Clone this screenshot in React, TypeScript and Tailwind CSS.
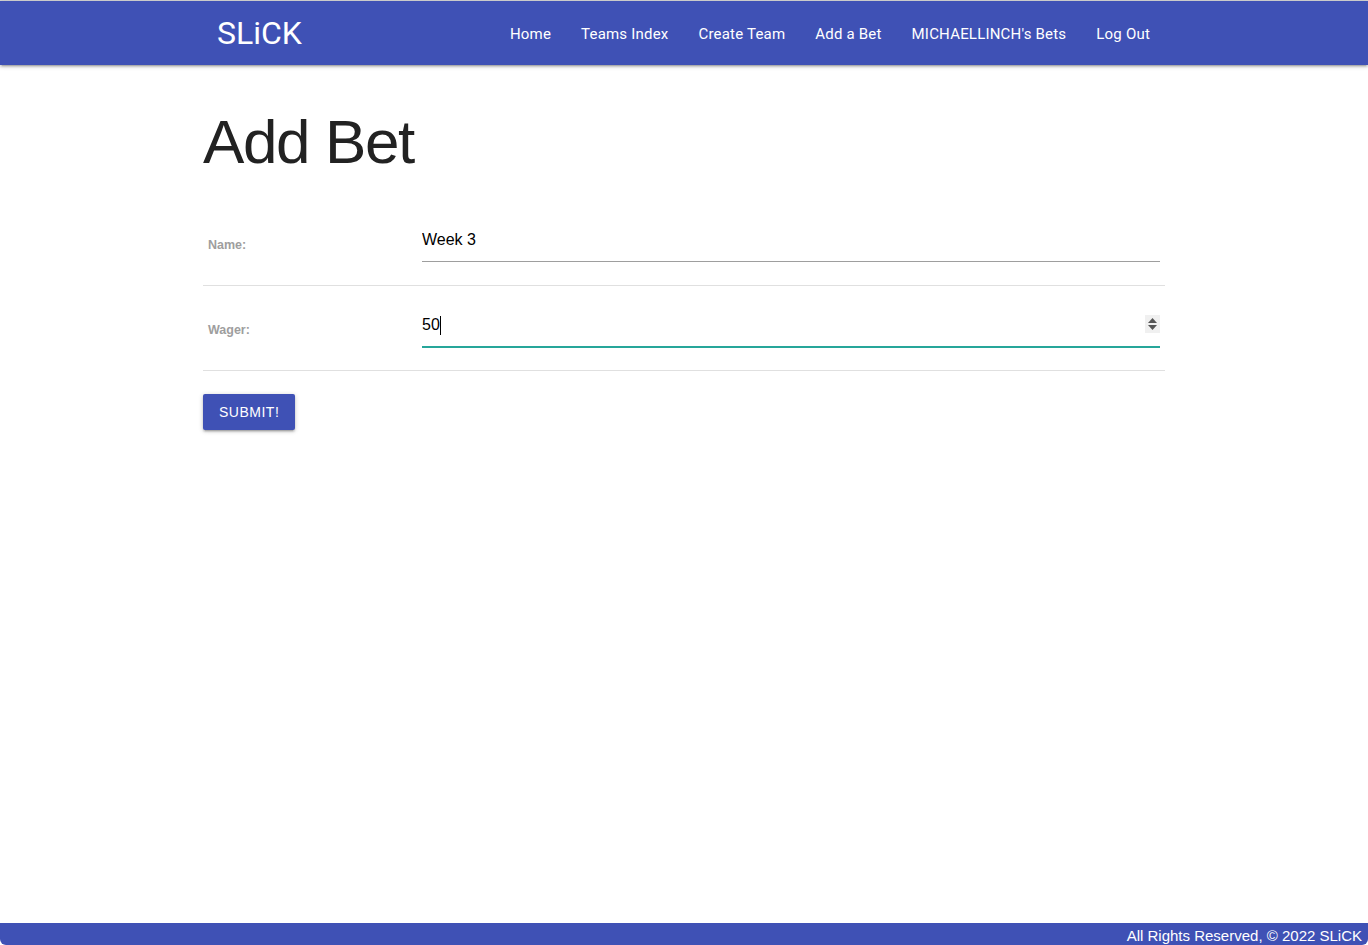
import React from "react";

const links = ["Home", "Teams Index", "Create Team", "Add a Bet", "MICHAELLINCH's Bets", "Log Out"];

export default function App() {
  return (
    <div className="min-h-[945px] flex flex-col bg-white" style={{ fontFamily: '"Liberation Sans", Arial, sans-serif' }}>
      <div className="h-px bg-[#d6d6d6]" />
      <nav className="h-16 bg-[#3f51b5] shadow-[0_2px_2px_0_rgba(0,0,0,0.14),0_3px_1px_-2px_rgba(0,0,0,0.12),0_1px_5px_0_rgba(0,0,0,0.2)] relative z-10">
        <div className="w-[962px] mx-auto h-full flex items-center justify-between" style={{ fontFamily: 'Roboto, "Liberation Sans", sans-serif' }}>
          <a className="ml-[14px] text-white text-[32px] leading-none">SLiCK</a>
          <ul className="flex h-full items-center pt-[2px]">
            {links.map((l) => (
              <li key={l}>
                <a className="px-[15px] text-white text-[15px] tracking-[0.2px] leading-[64px] block">{l}</a>
              </li>
            ))}
          </ul>
        </div>
      </nav>
      <main className="flex-1">
        <div className="w-[962px] mx-auto">
          <h1 className="mt-[42px] mb-[25px] text-[62px] leading-[69px] text-[#222] tracking-[-1.4px]">Add Bet</h1>
          <table className="w-full border-collapse">
            <tbody>
              <tr className="border-b border-[#e0e0e0]">
                <td className="w-[214px] px-[5px] py-[15px] align-middle">
                  <span className="text-[12.5px] font-bold text-[#9e9e9e] relative top-[1px]">Name:</span>
                </td>
                <td className="px-[5px] py-[15px]">
                  <input
                    readOnly
                    value="Week 3"
                    className="w-full h-[46px] pt-[3px] mb-[8px] border-0 border-b border-[#9e9e9e] outline-none text-[16px] text-black bg-transparent block"
                  />
                </td>
              </tr>
              <tr className="border-b border-[#e0e0e0]">
                <td className="w-[214px] px-[5px] py-[15px] align-middle">
                  <span className="text-[12.5px] font-bold text-[#9e9e9e] relative top-[1px]">Wager:</span>
                </td>
                <td className="px-[5px] py-[15px]">
                  <div className="relative w-full h-[46px] pt-[3px] mb-[8px] border-b border-[#26a69a] shadow-[0_1px_0_0_#26a69a] flex items-center text-[16px] text-black">
                    <span>50</span>
                    <span className="inline-block w-px h-[19px] bg-black" />
                    <div className="absolute right-0 top-[14px] w-[15px] h-[18px] bg-[#f0f0f0] flex flex-col items-center justify-center gap-[2px]">
                      <svg width="9" height="5" viewBox="0 0 9 5"><path d="M4.5 0L9 5H0z" fill="#555" /></svg>
                      <svg width="9" height="5" viewBox="0 0 9 5"><path d="M0 0H9L4.5 5z" fill="#555" /></svg>
                    </div>
                  </div>
                </td>
              </tr>
            </tbody>
          </table>
          <button className="mt-[23px] h-[36px] px-[16px] bg-[#3f51b5] text-white text-[14px] uppercase tracking-[0.5px] rounded-[2px] shadow-[0_2px_2px_0_rgba(0,0,0,0.14),0_3px_1px_-2px_rgba(0,0,0,0.12),0_1px_5px_0_rgba(0,0,0,0.2)]">
            Submit!
          </button>
        </div>
      </main>
      <footer className="h-[22px] bg-[#3f51b5] text-white text-[15px] leading-[22px] pt-[2px] text-right pr-[6px] rounded-b-[6px]">
        All Rights Reserved, © 2022 SLiCK
      </footer>
    </div>
  );
}
